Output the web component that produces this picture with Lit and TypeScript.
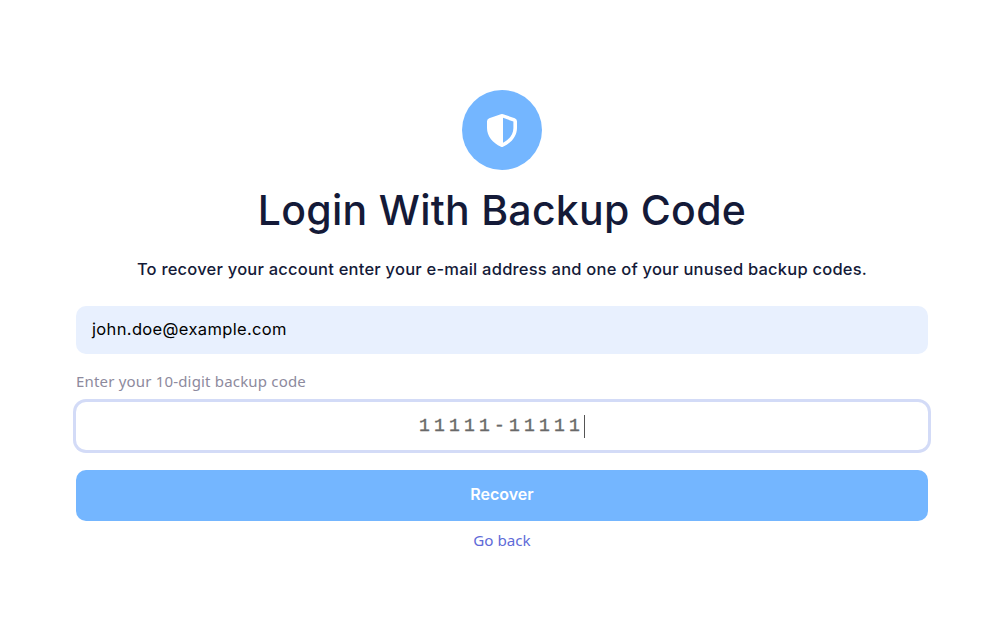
import { LitElement, html, css } from "lit";
import { customElement } from "lit/decorators.js";

@customElement("app-root")
export class AppRoot extends LitElement {
  static styles = css`
    :host { display: block; width: 1006px; height: 641px; background: #fff; overflow: hidden; font-family: Inter, sans-serif; }
    .page { display: flex; flex-direction: column; align-items: center; padding: 90px 78px 0 76px; box-sizing: border-box; }
    .badge { width: 80px; height: 80px; border-radius: 50%; background: #74b6ff; display: flex; align-items: center; justify-content: center; }
    .badge svg { display: block; }
    h1 { margin: 11px 0 0; height: 58px; line-height: 58px; font-size: 41px; font-weight: 500; color: #141a38; letter-spacing: 0.27px; white-space: nowrap; }
    .lead { margin: 18px 0 0; height: 24px; line-height: 24px; font-size: 16.5px; font-weight: 500; color: #141a38; letter-spacing: 0.22px; white-space: nowrap; }
    .email { margin-top: 25px; width: 100%; height: 48px; box-sizing: border-box; border-radius: 10px; background: #e8f0fe; padding-left: 16px; line-height: 46px; font-size: 16.5px; color: #000; letter-spacing: 0.35px; }
    .label { align-self: flex-start; margin-top: 17px; height: 21px; line-height: 21px; font-size: 15px; color: #8d8a9d; letter-spacing: 0.18px; font-family: "Noto Sans", sans-serif; }
    .code { margin-top: 10px; width: 100%; height: 48px; box-sizing: border-box; border-radius: 10px; background: #fff; box-shadow: 0 0 0 3px #d3dbf7; display: flex; align-items: center; justify-content: center; font-family: "Liberation Mono", monospace; font-size: 18px; -webkit-text-stroke: 0.4px #696969; color: #696969; letter-spacing: 4.2px; }
    .caret { width: 1px; height: 23px; background: #555; }
    .recover { margin-top: 20px; width: 100%; height: 51px; border: 0; padding: 0 0 3px; border-radius: 10px; background: #74b6ff; color: #fff; font: 600 16px Inter, sans-serif; }
    .back { margin-top: 8px; height: 22px; line-height: 22px; font-size: 15.2px; color: #5f6bd8; font-family: "Noto Sans", sans-serif; text-decoration: none; }
  `;

  render() {
    return html`<div class="page">
      <div class="badge">
        <svg width="32" height="36" viewBox="0 0 32 36" aria-hidden="true">
          <path fill="#fff" fill-rule="evenodd" d="M14.8 2.3 Q16 1.8 17.2 2.3 L28.8 6.2 Q31 7 31 9.2 V16 C31 24 25.5 31 17 34.7 Q16 35.1 15 34.7 C6.5 31 1 24 1 16 V9.2 Q1 7 3.2 6.2 Z M17 5.8 V30.8 C23.4 27.6 27.4 22.2 27.4 16 V9.6 Z"/>
        </svg>
      </div>
      <h1>Login With Backup Code</h1>
      <p class="lead">To recover your account enter your e-mail address and one of your unused backup codes.</p>
      <div class="email">john.doe@example.com</div>
      <div class="label">Enter your 10-digit backup code</div>
      <div class="code"><span>11111-11111</span><span class="caret"></span></div>
      <button class="recover">Recover</button>
      <a class="back" href="#">Go back</a>
    </div>`;
  }
}
